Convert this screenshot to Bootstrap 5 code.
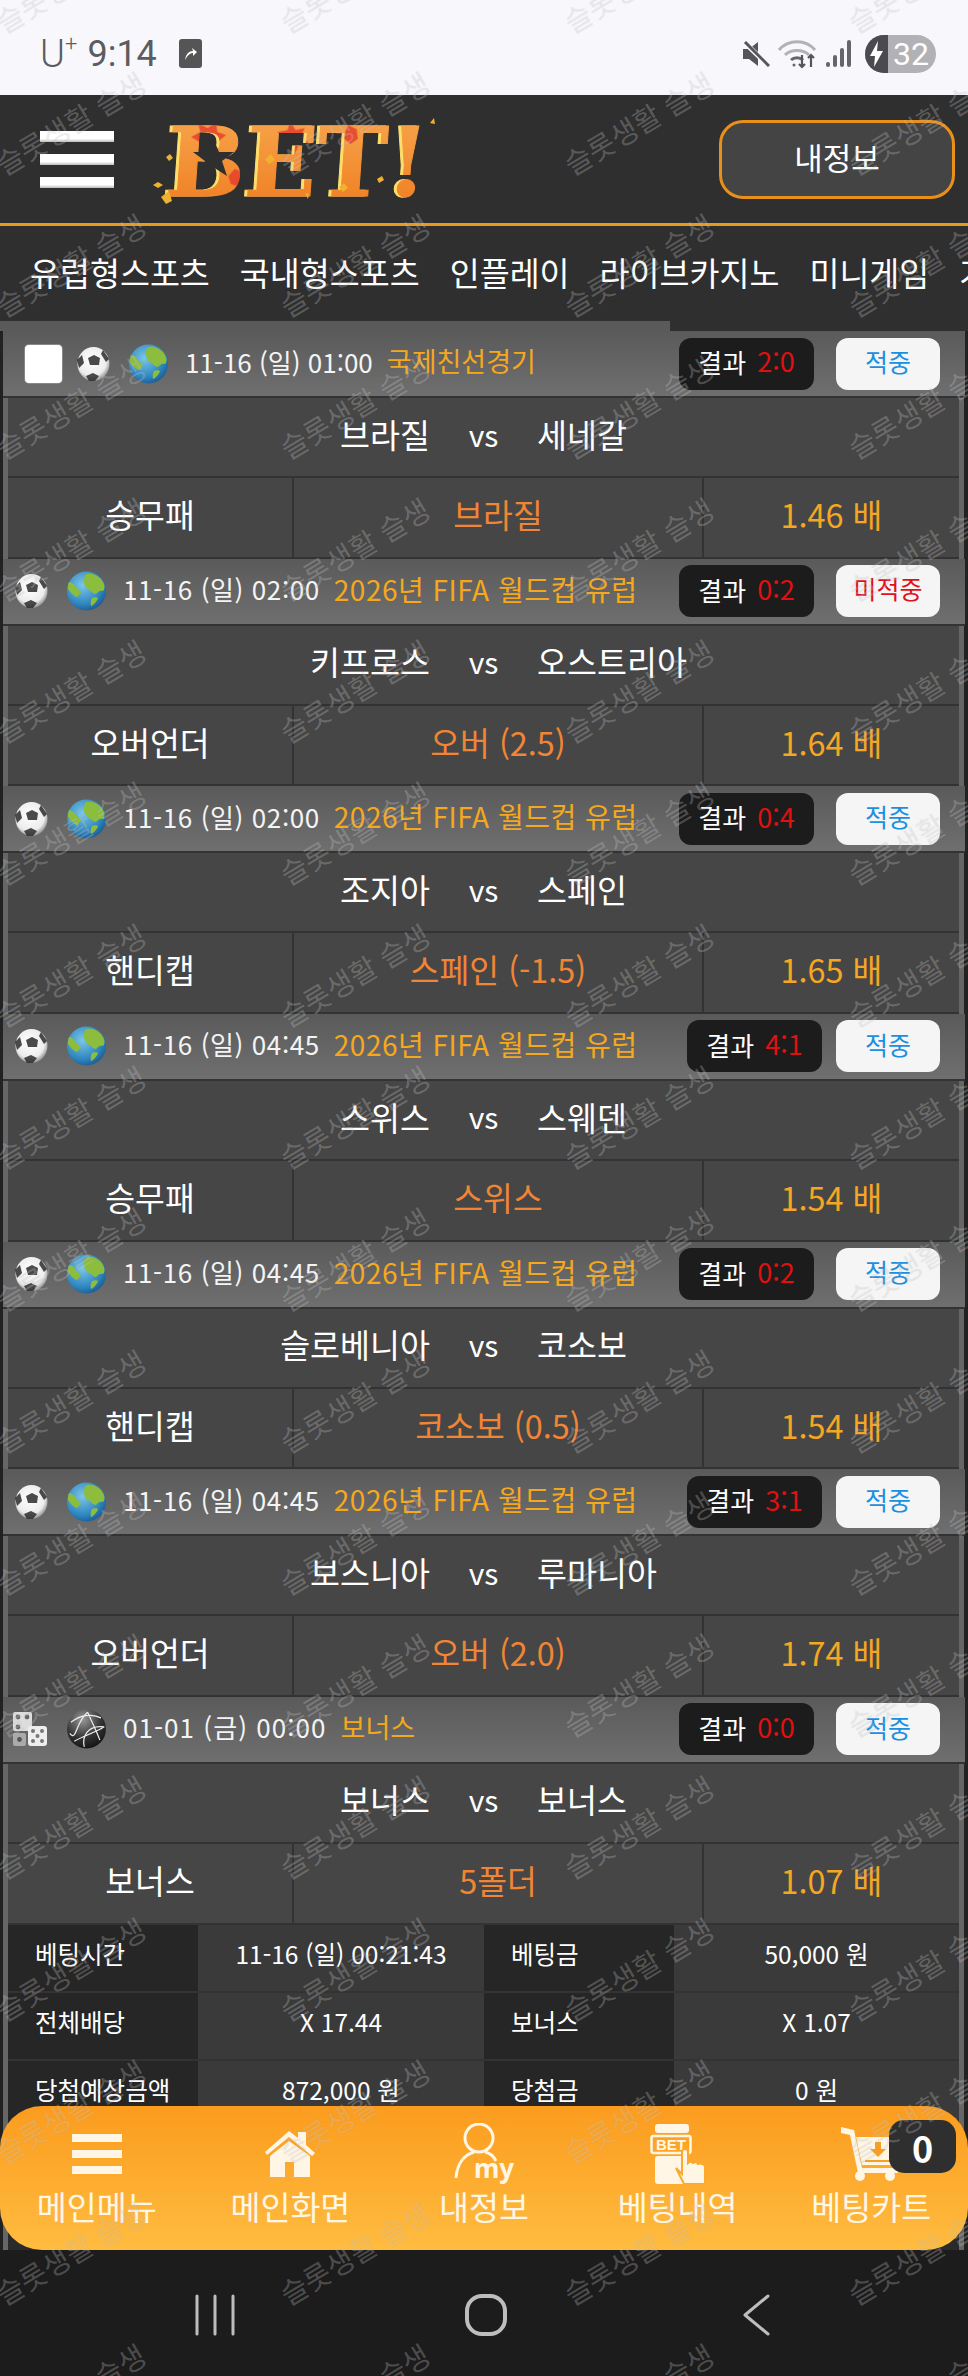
<!DOCTYPE html>
<html lang="ko">
<head>
  <meta charset="UTF-8">
  <title>베팅내역</title>
  <link href="https://cdn.jsdelivr.net/npm/bootstrap@5.3.3/dist/css/bootstrap.min.css" rel="stylesheet">
  <style>
    html, body { margin: 0; background: #1c1c1c; overflow: hidden; }
    body { font-family: "Noto Sans CJK KR", "Noto Sans", sans-serif; color: #fff; }
    .phone { width: 968px; height: 2376px; overflow: hidden; }

    /* 상단 상태바 */
    .status-bar { height: 95px; background: #f8f8fc; color: #5c5c60; padding: 12px 32px 0 40px; flex: none; }
    .status-u { font: 300 38px/1 Roboto, sans-serif; }
    .status-u sup { font-size: 22px; top: -.7em; }
    .status-time { font: 400 36px/1 Roboto, sans-serif; margin-left: 10px; }
    .app-chip { width: 23px; height: 29px; margin-left: 22px; }
    .batt { width: 71px; height: 38px; border-radius: 19px; overflow: hidden; background: #b2b2b6; margin-left: 13px; }
    .batt-l { width: 23px; height: 100%; background: #4a4a50; }
    .batt-n { font: 400 32px/38px Roboto, sans-serif; color: #fff; padding-left: 5px; }

    /* 헤더 */
    .top-head { height: 131px; background: #2f2f2f; border-bottom: 3px solid #e89a1a; padding: 0 13px 0 40px; flex: none; }
    .burger { width: 74px; }
    .burger i { display: block; height: 11px; margin-bottom: 12px; background: linear-gradient(#fff 70%, #bbb); }
    .burger i:last-child { margin-bottom: 0; }
    .logo-wrap { margin-left: 31px; width: 300px; height: 100px; }
    .my-btn { width: 236px; height: 79px; border: 3px solid #e8901a; border-radius: 24px; background: #444; color: #fff; font-size: 31px; line-height: 1; padding: 0 0 5px 0; }

    .main-nav { height: 95px; background: #2f2f2f; padding: 0 0 3px 30px; gap: 30px; white-space: nowrap; overflow: hidden; font-size: 32.6px; flex: none; }
    .scroll-strip { height: 10px; background: #2f2f2f; flex: none; }
    .scroll-strip div { width: 670px; height: 100%; background: #5a5a5a; }

    /* 베팅 목록 */
    .bet-area { height: 1919px; background: #222; }
    .bet-strip { margin: 0 4px 0 3px; padding: 0 5px; height: 100%; background: #666; }
    .bet-sheet { height: 100%; background: #2a2a2a; }
    .m-head { height: 67px; margin: 0 -6px 0 -5px; background: linear-gradient(#5a5a5a, #6f6f6f); border-bottom: 2px solid #333; }
    .m-left { padding-left: 12px; }
    .m-left.has-check { padding-left: 22px; }
    .check-box { width: 37px; height: 38px; background: #fff; border-radius: 4px; box-shadow: 0 0 0 1px #888; margin-right: 15px; }
    .ic-ball { width: 33px; height: 36px; }
    .ic-globe { width: 41px; height: 40px; margin-left: 18px; }
    .ic-dice { width: 36px; height: 36px; margin-left: -3px; }
    .m-time { font-size: 26px; margin-left: 16px; padding-bottom: 5px; color: #f4f4f4; white-space: nowrap; }
    .m-time.wide { letter-spacing: .6px; }
    .m-time.wider { letter-spacing: 1.05px; }
    .m-league { font-size: 28px; letter-spacing: .5px; margin-left: 14px; padding-bottom: 5px; color: #f5a81c; white-space: nowrap; }
    .m-league.short { font-size: 27px; letter-spacing: 0; }
    .res-box { width: 135px; height: 52px; padding-bottom: 4px; background: #1c1c1c; border-radius: 12px; font-size: 26px; gap: 11px; margin-right: 22px; }
    .res-box.near { margin-right: 14px; }
    .res-box b { color: #e01010; font-weight: 400; font-size: 27px; }
    .hit-btn { width: 104px; height: 52px; padding-bottom: 4px; background: #f5f5f5; border-radius: 12px; font-size: 25px; color: #1b8fe0; margin-right: 25px; }
    .hit-btn.miss { color: #e01020; }
    .m-teams { height: 80px; padding-bottom: 6px; background: #464646; border-bottom: 2px solid #333; font-size: 32.6px; display: grid; grid-template-columns: 1fr 107px 1fr; align-items: center; }
    .m-teams .home { text-align: right; }
    .m-teams .vs { text-align: center; font-size: 30px; }
    .m-bet { height: 80.67px; background: #464646; border-bottom: 2px solid #333; font-size: 32.4px; display: grid; grid-template-columns: 284px 410px 1fr; }
    .m-bet > div { display: flex; align-items: center; justify-content: center; padding-bottom: 6px; }
    .m-bet > div + div { border-left: 2px solid #333; }
    .c-pick { color: #f08535; }
    .c-odds { color: #f5a623; }

    .info-grid { display: grid; grid-template-columns: 190px 286px 190px 1fr; grid-auto-rows: 68px; font-size: 24.5px; }
    .info-grid > div { display: flex; align-items: center; padding-bottom: 6px; border-bottom: 2px solid #333; white-space: nowrap; }
    .i-label { background: #262626; padding-left: 27px; }
    .i-val { background: #3a3a3a; justify-content: center; }

    /* 하단 메뉴 */
    .foot-menu { left: 0; right: 0; bottom: 0; height: 144px; border-radius: 42px; background: linear-gradient(#fb9c1e, #ffbc40); color: #fff6e6; }
    .foot-item { width: 20%; }
    .foot-icon { height: 64px; }
    .foot-icon svg { display: block; }
    .foot-text { font-size: 32.6px; line-height: 1; margin-top: 4px; }
    .cart-count { right: 12px; top: 14px; width: 67px; height: 53px; background: #2f2f2f; border-radius: 15px; color: #fff; font-size: 36px; font-weight: 700; line-height: 1; }

    .sys-nav { height: 126px; background: #1c1c1c; padding: 0 0 0 4px; gap: 211px; flex: none; }
    .sys-nav svg { width: 60px; height: 44px; display: block; margin-top: 4px; }

    /* 워터마크 */
    .wm-layer { left: -72px; top: -91px; display: grid; grid-template-columns: repeat(4, 284px); grid-auto-rows: 142px; pointer-events: none; z-index: 10; }
    .wm-layer span { place-self: center; transform: rotate(-31deg); white-space: nowrap; font-size: 29px; line-height: 1; color: rgba(255,255,255,.24); text-shadow: 0 0 1px rgba(0,0,0,.1); }
  </style>
</head>
<body>

<svg width="0" height="0" class="position-absolute">
  <defs>
    <radialGradient id="ballFill" cx=".45" cy=".4" r=".65">
      <stop offset="0" stop-color="#fff"/><stop offset=".7" stop-color="#ececec"/><stop offset="1" stop-color="#777"/>
    </radialGradient>
    <radialGradient id="seaFill" cx=".4" cy=".35" r=".75">
      <stop offset="0" stop-color="#7cc6e8"/><stop offset=".65" stop-color="#2f86bf"/><stop offset="1" stop-color="#164e86"/>
    </radialGradient>
    <radialGradient id="darkFill" cx=".4" cy=".25" r=".8">
      <stop offset="0" stop-color="#999"/><stop offset=".6" stop-color="#333"/><stop offset="1" stop-color="#111"/>
    </radialGradient>
    <symbol id="ball" viewBox="0 0 33 36">
      <ellipse cx="16.5" cy="18" rx="16" ry="17" fill="url(#ballFill)"/>
      <path d="M11 12l6-3 6 3-1 7h-9zM0 14l5-5 2 8-5 5zM26 4l6 9-3 3-5-8zM9 30l7-3 6 3-4 5h-6z" fill="#2c2c2c" opacity=".85"/>
    </symbol>
    <symbol id="globe" viewBox="0 0 41 40">
      <circle cx="20.5" cy="20" r="19.5" fill="url(#seaFill)"/>
      <path d="M20 3c6-2 14 2 17 8 2 3 2 7 0 9-3-1-5 1-7 3-3 0-4-3-7-4-3-2-5-5-5-8 0-3 0-6 2-8zM3 11c2 0 4 1 6 4 2 3 5 4 6 7-2 1-3 4-5 4-3-2-6-5-8-8 0-2 0-5 1-7zM26 27c2-1 5-1 6 0-1 3-4 7-7 8-1-3 0-6 1-8z" fill="#8dbd3c"/>
    </symbol>
    <symbol id="darkball" viewBox="0 0 36 36">
      <circle cx="18" cy="18" r="17.5" fill="url(#darkFill)"/>
      <path d="M4 12C12 5 24 4 31 8M3 22C9 30 8 12 19 3M19 3C24 14 28 22 30 28M7 29C16 24 24 22 34 16M16 34C14 26 18 14 34 16" fill="none" stroke="#eee" stroke-width="1.1"/>
    </symbol>
    <symbol id="dice" viewBox="0 0 36 36">
      <rect x="1" y="1" width="19" height="19" rx="2" fill="#ddd"/>
      <rect x="16" y="15" width="19" height="20" rx="3" fill="#eee"/>
      <g fill="#666"><circle cx="6" cy="6" r="2.4"/><circle cx="15" cy="6" r="2.4"/><circle cx="6" cy="16" r="2.4"/></g>
      <g fill="#777"><circle cx="21" cy="20" r="2"/><circle cx="30" cy="20" r="2"/><circle cx="25.5" cy="25" r="2"/><circle cx="21" cy="30" r="2"/><circle cx="30" cy="30" r="2"/></g>
      <rect x="1" y="22" width="13" height="13" rx="2" fill="#aaa"/><circle cx="7.5" cy="28.5" r="2.4" fill="#555"/>
    </symbol>
  </defs>
</svg>

<div class="phone position-relative d-flex flex-column">

  <!-- 상태바 -->
  <div class="status-bar d-flex align-items-center">
    <span class="status-u">U<sup>+</sup></span>
    <span class="status-time">9:14</span>
    <svg class="app-chip" viewBox="0 0 23 29"><rect width="23" height="29" rx="3" fill="#555"/><path d="M6 21c1-6 4-9 8-9l-1-3 5 4-4 4v-3c-3 0-5 2-8 7z" fill="#fff"/></svg>
    <span class="ms-auto d-flex align-items-center">
      <svg width="28" height="26" viewBox="0 0 28 26"><path d="M1 8h6l9-7v24l-9-7H1z" fill="#55555a"/><path d="M2 1l25 24" stroke="#f8f8fc" stroke-width="5"/><path d="M3 1l24 24" stroke="#55555a" stroke-width="3"/></svg>
      <svg class="ms-2" width="40" height="30" viewBox="0 0 40 30" fill="none" stroke="#b2b2b6" stroke-width="3"><path d="M1 11C10 0 28 0 37 11M7 16c6-6 18-6 24 0"/><path d="M13 21c3-3 9-3 12 0" stroke="#66666a"/><circle cx="16" cy="26" r="1.5" fill="#66666a" stroke="none"/><path d="M24 16v12m-3-3l3 3 3-3M33 28V16m-3 3l3-3 3 3" stroke="#55555a" stroke-width="2.2"/></svg>
      <svg class="ms-2" width="26" height="28" viewBox="0 0 26 28" fill="#66666a"><rect x="0" y="22" width="4" height="5" rx="2"/><rect x="7" y="15" width="4" height="12" rx="2"/><rect x="14" y="8" width="4" height="19" rx="2"/><rect x="21" y="0" width="4" height="27" rx="2"/></svg>
      <span class="batt d-flex">
        <span class="batt-l d-flex align-items-center justify-content-center"><svg width="15" height="26" viewBox="0 0 15 26"><path d="M9 0L1 15h5l-1 11 9-16H8z" fill="#fff"/></svg></span>
        <span class="batt-n">32</span>
      </span>
    </span>
  </div>

  <!-- 헤더 -->
  <div class="top-head d-flex align-items-center">
    <div class="burger"><i></i><i></i><i></i></div>
    <div class="logo-wrap">
      <svg width="300" height="100" viewBox="0 0 300 100">
        <defs>
          <linearGradient id="logoOrange" x1="0" y1="0" x2="0" y2="1"><stop offset="0" stop-color="#f7a74e"/><stop offset="1" stop-color="#f07e22"/></linearGradient>
          <pattern id="logoLeaf" patternUnits="userSpaceOnUse" width="300" height="100">
            <rect width="300" height="100" fill="url(#logoOrange)"/>
            <g fill="#e5392a" opacity=".8">
              <path d="M30 14l10 5 8-6 2 10 9 3-8 7 1 9-10-4-8 5-1-10-9-5 9-5z"/>
              <path d="M122 12l6 9 9-2-3 9 8 6-10 2-3 10-6-9-10 1 4-9-7-6 10-2z"/>
              <path d="M70 60l8 3 3 8-5 7-9-3-3-8z"/>
              <path d="M180 16l9 4 2 10-7 5-8-6zM262 40l9 4 1 12-9 4-6-10z"/>
            </g>
          </pattern>
        </defs>
        <g font-family="DejaVu Serif, serif" font-weight="700" font-size="96" transform="translate(24 0) skewX(-4)">
          <text x="-2" y="87" textLength="262" lengthAdjust="spacingAndGlyphs" fill="#ffdf6b" stroke="#ffdf6b" stroke-width="1">BET!</text>
          <text x="1" y="87" textLength="262" lengthAdjust="spacingAndGlyphs" fill="url(#logoLeaf)" stroke="url(#logoLeaf)" stroke-width="1">BET!</text>
        </g>
        <path d="M68 29l6 14h15l-12 9 5 15-14-9-13 9 5-15-12-9h15z" fill="#2f2f2f"/>
        <g fill="#f0b030"><path d="M8 76l5-3 5 3-5 3zM21 48l4-3 3 4-4 3zM120 50l6-5 4 6-6 4zM194 78l5-4 4 5-5 4zM232 70l5-3 2 4-5 3zM16 88l8-6 3 10-6 3zM285 14l4-5 1 6zM160 84l4 1-1 5z"/></g>
      </svg>
    </div>
    <button type="button" class="btn my-btn ms-auto d-flex align-items-center justify-content-center">내정보</button>
  </div>

  <!-- 메뉴 -->
  <div class="main-nav d-flex align-items-center">
    <span>유럽형스포츠</span><span>국내형스포츠</span><span>인플레이</span><span>라이브카지노</span><span>미니게임</span><span>가상게임</span>
  </div>
  <div class="scroll-strip"><div></div></div>

  <!-- 베팅 목록 -->
  <div class="bet-area position-relative">
    <div class="bet-strip"><div class="bet-sheet">

      <div class="m-head d-flex align-items-center justify-content-between">
        <div class="m-left has-check d-flex align-items-center">
          <span class="check-box"></span><svg class="ic-ball"><use href="#ball"/></svg><svg class="ic-globe"><use href="#globe"/></svg>
          <span class="m-time">11-16 (일) 01:00</span><span class="m-league short">국제친선경기</span>
        </div>
        <div class="d-flex align-items-center">
          <div class="res-box d-flex align-items-center justify-content-center">결과 <b>2:0</b></div>
          <div class="hit-btn d-flex align-items-center justify-content-center">적중</div>
        </div>
      </div>
      <div class="m-teams"><span class="home">브라질</span><span class="vs">vs</span><span>세네갈</span></div>
      <div class="m-bet"><div>승무패</div><div class="c-pick">브라질</div><div class="c-odds">1.46 배</div></div>

      <div class="m-head d-flex align-items-center justify-content-between">
        <div class="m-left d-flex align-items-center">
          <svg class="ic-ball"><use href="#ball"/></svg><svg class="ic-globe"><use href="#globe"/></svg>
          <span class="m-time wide">11-16 (일) 02:00</span><span class="m-league">2026년 FIFA 월드컵 유럽</span>
        </div>
        <div class="d-flex align-items-center">
          <div class="res-box d-flex align-items-center justify-content-center">결과 <b>0:2</b></div>
          <div class="hit-btn miss d-flex align-items-center justify-content-center">미적중</div>
        </div>
      </div>
      <div class="m-teams"><span class="home">키프로스</span><span class="vs">vs</span><span>오스트리아</span></div>
      <div class="m-bet"><div>오버언더</div><div class="c-pick">오버 (2.5)</div><div class="c-odds">1.64 배</div></div>

      <div class="m-head d-flex align-items-center justify-content-between">
        <div class="m-left d-flex align-items-center">
          <svg class="ic-ball"><use href="#ball"/></svg><svg class="ic-globe"><use href="#globe"/></svg>
          <span class="m-time wide">11-16 (일) 02:00</span><span class="m-league">2026년 FIFA 월드컵 유럽</span>
        </div>
        <div class="d-flex align-items-center">
          <div class="res-box d-flex align-items-center justify-content-center">결과 <b>0:4</b></div>
          <div class="hit-btn d-flex align-items-center justify-content-center">적중</div>
        </div>
      </div>
      <div class="m-teams"><span class="home">조지아</span><span class="vs">vs</span><span>스페인</span></div>
      <div class="m-bet"><div>핸디캡</div><div class="c-pick">스페인 (-1.5)</div><div class="c-odds">1.65 배</div></div>

      <div class="m-head d-flex align-items-center justify-content-between">
        <div class="m-left d-flex align-items-center">
          <svg class="ic-ball"><use href="#ball"/></svg><svg class="ic-globe"><use href="#globe"/></svg>
          <span class="m-time wide">11-16 (일) 04:45</span><span class="m-league">2026년 FIFA 월드컵 유럽</span>
        </div>
        <div class="d-flex align-items-center">
          <div class="res-box near d-flex align-items-center justify-content-center">결과 <b>4:1</b></div>
          <div class="hit-btn d-flex align-items-center justify-content-center">적중</div>
        </div>
      </div>
      <div class="m-teams"><span class="home">스위스</span><span class="vs">vs</span><span>스웨덴</span></div>
      <div class="m-bet"><div>승무패</div><div class="c-pick">스위스</div><div class="c-odds">1.54 배</div></div>

      <div class="m-head d-flex align-items-center justify-content-between">
        <div class="m-left d-flex align-items-center">
          <svg class="ic-ball"><use href="#ball"/></svg><svg class="ic-globe"><use href="#globe"/></svg>
          <span class="m-time wide">11-16 (일) 04:45</span><span class="m-league">2026년 FIFA 월드컵 유럽</span>
        </div>
        <div class="d-flex align-items-center">
          <div class="res-box d-flex align-items-center justify-content-center">결과 <b>0:2</b></div>
          <div class="hit-btn d-flex align-items-center justify-content-center">적중</div>
        </div>
      </div>
      <div class="m-teams"><span class="home">슬로베니아</span><span class="vs">vs</span><span>코소보</span></div>
      <div class="m-bet"><div>핸디캡</div><div class="c-pick">코소보 (0.5)</div><div class="c-odds">1.54 배</div></div>

      <div class="m-head d-flex align-items-center justify-content-between">
        <div class="m-left d-flex align-items-center">
          <svg class="ic-ball"><use href="#ball"/></svg><svg class="ic-globe"><use href="#globe"/></svg>
          <span class="m-time wide">11-16 (일) 04:45</span><span class="m-league">2026년 FIFA 월드컵 유럽</span>
        </div>
        <div class="d-flex align-items-center">
          <div class="res-box near d-flex align-items-center justify-content-center">결과 <b>3:1</b></div>
          <div class="hit-btn d-flex align-items-center justify-content-center">적중</div>
        </div>
      </div>
      <div class="m-teams"><span class="home">보스니아</span><span class="vs">vs</span><span>루마니아</span></div>
      <div class="m-bet"><div>오버언더</div><div class="c-pick">오버 (2.0)</div><div class="c-odds">1.74 배</div></div>

      <div class="m-head d-flex align-items-center justify-content-between">
        <div class="m-left d-flex align-items-center">
          <svg class="ic-dice"><use href="#dice"/></svg><svg class="ic-globe"><use href="#darkball"/></svg>
          <span class="m-time wider">01-01 (금) 00:00</span><span class="m-league short">보너스</span>
        </div>
        <div class="d-flex align-items-center">
          <div class="res-box d-flex align-items-center justify-content-center">결과 <b>0:0</b></div>
          <div class="hit-btn d-flex align-items-center justify-content-center">적중</div>
        </div>
      </div>
      <div class="m-teams"><span class="home">보너스</span><span class="vs">vs</span><span>보너스</span></div>
      <div class="m-bet"><div>보너스</div><div class="c-pick">5폴더</div><div class="c-odds">1.07 배</div></div>

      <!-- 베팅 요약 -->
      <div class="info-grid">
        <div class="i-label">베팅시간</div><div class="i-val">11-16 (일) 00:21:43</div><div class="i-label">베팅금</div><div class="i-val">50,000 원</div>
        <div class="i-label">전체배당</div><div class="i-val">X 17.44</div><div class="i-label">보너스</div><div class="i-val">X 1.07</div>
        <div class="i-label">당첨예상금액</div><div class="i-val">872,000 원</div><div class="i-label">당첨금</div><div class="i-val">0 원</div>
      </div>
    </div></div>

    <!-- 하단 메뉴 -->
    <div class="foot-menu position-absolute d-flex">
      <div class="foot-item d-flex flex-column align-items-center pt-3">
        <div class="foot-icon d-flex align-items-center">
          <svg width="50" height="40" viewBox="0 0 50 40" fill="#fff6e6"><rect width="50" height="8"/><rect y="16" width="50" height="8"/><rect y="32" width="50" height="8"/></svg>
        </div>
        <div class="foot-text">메인메뉴</div>
      </div>
      <div class="foot-item d-flex flex-column align-items-center pt-3">
        <div class="foot-icon d-flex align-items-center">
          <svg width="50" height="46" viewBox="0 0 50 46" fill="#fff6e6"><path d="M24 0L0 21l2 3L24 6l23 19 3-3-9-8V1h-8v6z"/><path d="M24 10L5 25v21h15V31h9v15h16V25z"/></svg>
        </div>
        <div class="foot-text">메인화면</div>
      </div>
      <div class="foot-item d-flex flex-column align-items-center pt-3">
        <div class="foot-icon d-flex align-items-center">
          <svg width="60" height="62" viewBox="0 0 60 62" fill="none" stroke="#fff6e6" stroke-width="3">
            <ellipse cx="25" cy="15" rx="14" ry="14"/>
            <path d="M2 55c1-14 8-23 18-26M31 29c5 1 9 5 11 9"/>
            <text x="20" y="55" font-family="Noto Sans, sans-serif" font-weight="700" font-size="26" fill="#fff6e6" stroke="none">my</text>
          </svg>
        </div>
        <div class="foot-text">내정보</div>
      </div>
      <div class="foot-item d-flex flex-column align-items-center pt-3">
        <div class="foot-icon d-flex align-items-center">
          <svg width="56" height="60" viewBox="0 0 56 60">
            <rect x="5" y="0" width="34" height="9" rx="3" fill="#fff6e6"/>
            <rect x="1.5" y="12" width="39" height="17" rx="2" fill="none" stroke="#fff6e6" stroke-width="2.5"/>
            <text x="21" y="26" text-anchor="middle" font-family="Liberation Sans, sans-serif" font-weight="700" font-size="15" fill="#fff6e6">BET</text>
            <rect x="5" y="32" width="32" height="28" rx="3" fill="#fff6e6"/>
            <path d="M26 44l6 6V28c0-4 6-4 6 0v11c2-2 4-1 5 0 2-1 4-1 5 1 3-1 7 0 7 3v17H34z" fill="#fff6e6" stroke="#fcaa2c" stroke-width="2"/>
          </svg>
        </div>
        <div class="foot-text">베팅내역</div>
      </div>
      <div class="foot-item d-flex flex-column align-items-center pt-3">
        <div class="foot-icon d-flex align-items-center">
          <svg width="60" height="54" viewBox="0 0 60 54">
            <path d="M0 0l13 3 8 38h36v5H17L9 8 0 6z" fill="#fff6e6"/>
            <path d="M15 10h45l-5 28H21z" fill="#fff6e6"/>
            <path d="M34 15h6v7h5l-8 8-8-8h5z" fill="#f79f25"/>
            <rect x="24" y="33" width="30" height="2" fill="#f79f25"/>
            <circle cx="19" cy="49" r="5" fill="#fff6e6"/><circle cx="49" cy="49" r="5" fill="#fff6e6"/>
          </svg>
        </div>
        <div class="foot-text">베팅카트</div>
      </div>
      <div class="cart-count position-absolute d-flex align-items-center justify-content-center">0</div>
    </div>
  </div>

  <!-- 시스템 내비게이션 -->
  <div class="sys-nav d-flex align-items-center justify-content-center">
    <svg viewBox="0 0 60 44" fill="none" stroke="#bdbdbd" stroke-width="3" stroke-linecap="round"><path d="M12 3v38M30 3v38M48 3v38"/></svg>
    <svg viewBox="0 0 60 44" fill="none" stroke="#bdbdbd" stroke-width="4"><rect x="11" y="3" width="38" height="38" rx="15"/></svg>
    <svg viewBox="0 0 60 44" fill="none" stroke="#bdbdbd" stroke-width="3" stroke-linecap="round" stroke-linejoin="round"><path d="M41 3L18 22l23 19"/></svg>
  </div>

  <!-- 워터마크 -->
  <div class="wm-layer position-absolute" id="wmLayer"></div>
</div>

<script>
  // 워터마크 반복 배치
  const wm = document.getElementById("wmLayer");
  for (let i = 0; i < 18 * 4; i++) {
    const s = document.createElement("span");
    s.textContent = "슬롯생활 슬생";
    wm.appendChild(s);
  }
</script>
<script src="https://cdn.jsdelivr.net/npm/bootstrap@5.3.3/dist/js/bootstrap.bundle.min.js"></script>
</body>
</html>
